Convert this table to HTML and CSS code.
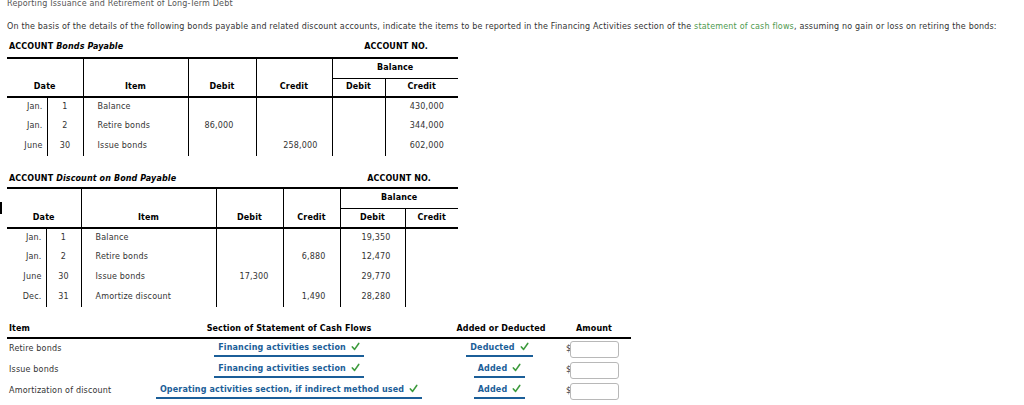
FILE: index.html
```html
<!DOCTYPE html>
<html>
<head>
<meta charset="utf-8">
<link rel="stylesheet" href="styles.css">
</head>
<body>
<div class="page">
  <div class="title">Reporting Issuance and Retirement of Long-Term Debt</div>
  <p class="intro">On the basis of the details of the following bonds payable and related discount accounts, indicate the items to be reported in the Financing Activities section of the <span class="term">statement of cash flows</span>, assuming no gain or loss on retiring the bonds:</p>

  <div class="acct-head acct-head-1">
    <span class="acct-name">ACCOUNT <em>Bonds Payable</em></span>
    <span class="acct-no">ACCOUNT NO.</span>
  </div>
  <table class="ledger ledger-1">
    <colgroup>
      <col class="c-mon1"><col class="c-day1"><col class="c-item1"><col class="c-deb1"><col class="c-cre1"><col class="c-bd1"><col class="c-bc1">
    </colgroup>
    <thead>
      <tr class="h1">
        <th colspan="2" rowspan="2" class="span-h first">Date</th>
        <th rowspan="2" class="span-h">Item</th>
        <th rowspan="2" class="span-h">Debit</th>
        <th rowspan="2" class="span-h">Credit</th>
        <th colspan="2" class="bal">Balance</th>
      </tr>
      <tr class="h2">
        <th class="sub">Debit</th>
        <th class="sub">Credit</th>
      </tr>
    </thead>
    <tbody>
      <tr><td class="mon first">Jan.</td><td class="day">1</td><td class="item">Balance</td><td></td><td></td><td></td><td class="num">430,000</td></tr>
      <tr><td class="mon first">Jan.</td><td class="day">2</td><td class="item">Retire bonds</td><td class="num deb1">86,000</td><td></td><td></td><td class="num">344,000</td></tr>
      <tr><td class="mon first">June</td><td class="day">30</td><td class="item">Issue bonds</td><td></td><td class="num">258,000</td><td></td><td class="num">602,000</td></tr>
    </tbody>
  </table>

  <div class="acct-head acct-head-2">
    <span class="acct-name">ACCOUNT <em>Discount on Bond Payable</em></span>
    <span class="acct-no">ACCOUNT NO.</span>
  </div>
  <table class="ledger ledger-2">
    <colgroup>
      <col class="c-mon2"><col class="c-day2"><col class="c-item2"><col class="c-deb2"><col class="c-cre2"><col class="c-bd2"><col class="c-bc2">
    </colgroup>
    <thead>
      <tr class="h1">
        <th colspan="2" rowspan="2" class="span-h first">Date</th>
        <th rowspan="2" class="span-h">Item</th>
        <th rowspan="2" class="span-h">Debit</th>
        <th rowspan="2" class="span-h">Credit</th>
        <th colspan="2" class="bal">Balance</th>
      </tr>
      <tr class="h2">
        <th class="sub">Debit</th>
        <th class="sub">Credit</th>
      </tr>
    </thead>
    <tbody>
      <tr><td class="mon first">Jan.</td><td class="day">1</td><td class="item">Balance</td><td></td><td></td><td class="num">19,350</td><td></td></tr>
      <tr><td class="mon first">Jan.</td><td class="day">2</td><td class="item">Retire bonds</td><td></td><td class="num">6,880</td><td class="num">12,470</td><td></td></tr>
      <tr><td class="mon first">June</td><td class="day">30</td><td class="item">Issue bonds</td><td class="num">17,300</td><td></td><td class="num">29,770</td><td></td></tr>
      <tr><td class="mon first">Dec.</td><td class="day">31</td><td class="item">Amortize discount</td><td></td><td class="num">1,490</td><td class="num">28,280</td><td></td></tr>
    </tbody>
  </table>

  <div class="cf">
    <div class="cf-row cf-head">
      <div class="cf-item">Item</div>
      <div class="cf-sec">Section of Statement of Cash Flows</div>
      <div class="cf-add">Added or Deducted</div>
      <div class="cf-amt">Amount</div>
    </div>
    <div class="cf-row">
      <div class="cf-item">Retire bonds</div>
      <div class="cf-sec"><span class="pick">Financing activities section <svg class="chk" viewBox="0 0 10 10"><path d="M1.5 5.5 L4 8.2 L8.6 1.6"/></svg></span></div>
      <div class="cf-add"><span class="pick">Deducted <svg class="chk" viewBox="0 0 10 10"><path d="M1.5 5.5 L4 8.2 L8.6 1.6"/></svg></span></div>
      <div class="cf-amt"><span class="dollar">$</span><span class="box"></span></div>
    </div>
    <div class="cf-row">
      <div class="cf-item">Issue bonds</div>
      <div class="cf-sec"><span class="pick">Financing activities section <svg class="chk" viewBox="0 0 10 10"><path d="M1.5 5.5 L4 8.2 L8.6 1.6"/></svg></span></div>
      <div class="cf-add"><span class="pick">Added <svg class="chk" viewBox="0 0 10 10"><path d="M1.5 5.5 L4 8.2 L8.6 1.6"/></svg></span></div>
      <div class="cf-amt"><span class="dollar">$</span><span class="box"></span></div>
    </div>
    <div class="cf-row">
      <div class="cf-item">Amortization of discount</div>
      <div class="cf-sec"><span class="pick">Operating activities section, if indirect method used <svg class="chk" viewBox="0 0 10 10"><path d="M1.5 5.5 L4 8.2 L8.6 1.6"/></svg></span></div>
      <div class="cf-add"><span class="pick">Added <svg class="chk" viewBox="0 0 10 10"><path d="M1.5 5.5 L4 8.2 L8.6 1.6"/></svg></span></div>
      <div class="cf-amt"><span class="dollar">$</span><span class="box"></span></div>
    </div>
  </div>
  <div class="edge-mark"></div>
</div>
</body>
</html>
```

FILE: styles.css
```css
html, body {
  margin: 0;
  padding: 0;
  background: #fff;
}
body {
  font-family: "DejaVu Sans", Verdana, sans-serif;
  font-size: 8px;
  line-height: 10px;
  letter-spacing: 0.18px;
  color: #333;
}
.page {
  position: relative;
  padding: 0 7px;
}
.title {
  margin-top: -1px;
  color: #555;
}
.intro {
  margin: 13px 0 0 0;
  color: #333;
  white-space: nowrap;
}
.term {
  color: #4f9a4f;
}
.acct-head {
  display: flex;
  justify-content: space-between;
  width: 451px;
  font-weight: bold;
  color: #000;
  letter-spacing: 0.12px;
}
.acct-head-1 {
  margin-top: 10px;
}
.acct-head-1 .acct-no { margin-right: 30px; }
.acct-head-2 {
  margin-top: 18px;
}
.acct-head-2 .acct-no { margin-right: 27px; }
.acct-name { padding-left: 2px; }
.acct-name em { font-style: italic; }

.ledger {
  border-collapse: collapse;
  table-layout: fixed;
  width: 451px;
  margin-top: 3px;
  border-top: 2px solid #000;
}
.ledger-1 { margin-top: 5px; }
.ledger th, .ledger td {
  padding: 0;
  border-left: 1px solid #000;
  white-space: nowrap;
}
.ledger .first { border-left: none; }
.ledger th {
  font-weight: bold;
  color: #000;
  text-align: center;
  letter-spacing: 0.12px;
}
.ledger .h1 { height: 20px; }
.ledger-2 .h1 { height: 21px; }
.ledger .h2 { height: 19px; }
.ledger .span-h {
  vertical-align: bottom;
  padding-bottom: 4px;
  border-bottom: 2px solid #000;
}
.ledger .bal {
  border-bottom: 1px solid #000;
  vertical-align: middle;
}
.ledger .sub {
  border-bottom: 2px solid #000;
  vertical-align: middle;
}
.ledger-1 tbody tr { height: 19.5px; }
.ledger-2 tbody tr { height: 19.8px; }
.ledger td { vertical-align: middle; }
.ledger .mon { text-align: right; padding-right: 4px; }
.ledger .day { text-align: center; }
.ledger .item { padding-left: 14px; }
.ledger .num { text-align: right; padding-right: 14px; }
.ledger .deb1 { padding-right: 22px; }

.c-mon1 { width: 40px; }
.c-day1 { width: 36px; }
.c-item1 { width: 105px; }
.c-deb1 { width: 68px; }
.c-cre1 { width: 76px; }
.c-bd1 { width: 53px; }
.c-bc1 { width: 73px; }

.c-mon2 { width: 39px; }
.c-day2 { width: 35px; }
.c-item2 { width: 135px; }
.c-deb2 { width: 67px; }
.c-cre2 { width: 57px; }
.c-bd2 { width: 65px; }
.c-bc2 { width: 53px; }

.cf {
  margin-top: 17px;
  width: 624px;
}
.cf-row {
  display: grid;
  grid-template-columns: 143px 278px 138px 65px;
  height: 21px;
  align-items: center;
}
.cf-head {
  height: 13px;
  border-bottom: 2px solid #000;
  font-weight: bold;
  color: #000;
  align-items: start;
  letter-spacing: 0.12px;
}
.cf-item { padding-left: 2px; }
.cf-sec { text-align: center; }
.cf-add { text-align: center; padding-left: 5px; }
.cf-head .cf-add { padding-left: 8px; }
.cf-head .cf-amt { padding-left: 10px; }
.pick {
  display: inline-block;
  padding: 0 4px 2px 4px;
  border-bottom: 2px solid #1b5e98;
  color: #1b5e98;
  font-weight: bold;
  line-height: 10px;
  letter-spacing: 0.15px;
}
.chk {
  width: 9px;
  height: 9px;
  vertical-align: -1px;
  margin-left: 2px;
}
.chk path {
  fill: none;
  stroke: #3d9b3d;
  stroke-width: 1.8;
  stroke-linecap: round;
  stroke-linejoin: round;
}
.cf-amt {
  display: flex;
  align-items: center;
}
.dollar {
  width: 4px;
  color: #333;
}
.box {
  display: inline-block;
  width: 47px;
  height: 15px;
  border: 1px solid #b8b8b8;
  border-radius: 3px;
  background: #fff;
}
.edge-mark {
  position: absolute;
  left: 0;
  top: 203px;
  width: 2px;
  height: 12px;
  background: #000;
}
```
